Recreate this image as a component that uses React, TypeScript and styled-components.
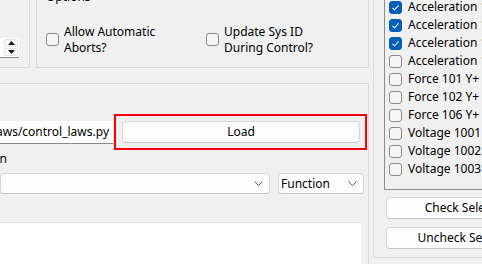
import React from "react";
import styled, { createGlobalStyle } from "styled-components";

const GlobalStyle = createGlobalStyle`
  html, body {
    margin: 0;
    padding: 0;
    background: #f0f0f0;
  }
  * {
    box-sizing: border-box;
  }
`;

const Window = styled.div`
  width: 482px;
  height: 264px;
  overflow: hidden;
  display: flex;
  align-items: flex-start;
  background: #f0f0f0;
  font-family: "Noto Sans", "Open Sans", sans-serif;
  font-size: 12px;
  line-height: 16px;
  color: #000;
`;

const LeftColumn = styled.div`
  width: 369px;
  flex: none;
  display: flex;
  flex-direction: column;
`;

const TopRow = styled.div`
  display: flex;
  gap: 6px;
  height: 82px;
  margin-top: -14px;
`;

const SideGroup = styled.div`
  width: 30px;
  flex: none;
  display: flex;
  flex-direction: column;
  justify-content: flex-end;
  padding-bottom: 9px;
  border-right: 1px solid #dadada;
  border-bottom: 1px solid #dadada;
`;

const SpinBox = styled.div`
  display: flex;
  width: 19px;
  height: 20px;
  background: #fff;
  border-bottom: 1px solid #8c8c8c;
`;

const SpinValue = styled.div`
  width: 4px;
  overflow: hidden;
`;

const SpinButtons = styled.div`
  display: flex;
  flex-direction: column;
  gap: 1px;
  width: 14px;
  margin: 1px 1px 1px 0;
`;

const SpinButton = styled.div`
  flex: 1;
  display: flex;
  align-items: center;
  justify-content: center;
  background: #fbfbfb;
  border: 1px solid #e2e2e2;
  border-radius: 2px;
`;

const OptionsGroup = styled.div`
  flex: 1;
  display: flex;
  flex-direction: column;
  padding: 2px 9px 0;
  border: 1px solid #dadada;
`;

const GroupTitle = styled.div`
  height: 16px;
`;

const OptionRow = styled.div`
  display: grid;
  grid-template-columns: 160px 1fr;
  margin-top: 19px;
`;

const Option = styled.label`
  display: flex;
  align-items: center;
  gap: 5px;
`;

const OptionText = styled.span`
  line-height: 15.5px;
`;

const Box = styled.span<{ $checked?: boolean }>`
  width: 13px;
  height: 13px;
  flex: none;
  display: flex;
  align-items: center;
  justify-content: center;
  border-radius: 3px;
  border: 1px solid ${({ $checked }) => ($checked ? "#005fb8" : "#8a8a8a")};
  background: ${({ $checked }) => ($checked ? "#005fb8" : "#f6f6f6")};
`;

const MainGroup = styled.div`
  margin-top: 15px;
  height: 200px;
  display: flex;
  flex-direction: column;
  border-top: 1px solid #dadada;
  border-right: 1px solid #dadada;
  padding-top: 30px;
`;

const PathRow = styled.div`
  display: flex;
  align-items: center;
  margin-right: 1px;
`;

const PathField = styled.div`
  width: 114px;
  height: 23px;
  flex: none;
  display: flex;
  justify-content: flex-end;
  align-items: center;
  overflow: hidden;
  white-space: nowrap;
  padding-right: 4px;
  background: #fff;
  border-right: 1px solid #e4e4e4;
  border-bottom: 1px solid #8c8c8c;
`;

const Highlight = styled.div`
  flex: 1;
  height: 36px;
  display: flex;
  align-items: center;
  padding: 0 5px 0 6px;
  border: 2px solid #ff0000;
`;

const Button = styled.div<{ $width?: number }>`
  height: 22px;
  width: ${({ $width }) => ($width ? `${$width}px` : "100%")};
  flex: none;
  display: flex;
  align-items: center;
  justify-content: center;
  white-space: nowrap;
  background: #fdfdfd;
  border: 1px solid #d6d6d6;
  border-bottom-color: #c4c4c4;
  border-radius: 4px;
`;

const FieldLabel = styled.div`
  width: 7px;
  display: flex;
  justify-content: flex-end;
  overflow: hidden;
  white-space: nowrap;
  margin-top: 1px;
`;

const ComboRow = styled.div`
  display: flex;
  gap: 8px;
  margin-top: 6px;
  padding-right: 6px;
`;

const Combo = styled.div<{ $width: number }>`
  width: ${({ $width }) => $width}px;
  height: 21px;
  flex: none;
  display: flex;
  align-items: center;
  justify-content: space-between;
  padding: 0 6px 0 2px;
  background: #fdfdfd;
  border: 1px solid #d6d6d6;
  border-bottom-color: #c4c4c4;
  border-radius: 3px;
`;

const TextArea = styled.div`
  margin-top: 28px;
  margin-right: 7px;
  flex: 1;
  background: #fff;
  border-top: 1px solid #e2e2e2;
`;

const RightColumn = styled.div`
  width: 200px;
  flex: none;
  margin-left: 4px;
  margin-top: -30px;
`;

const RightGroup = styled.div`
  display: flex;
  flex-direction: column;
  padding: 26px 0 8px 10px;
  border-left: 1px solid #dadada;
  border-bottom: 1px solid #dadada;
`;

const ChannelList = styled.div`
  height: 194px;
  display: flex;
  flex-direction: column;
  padding-top: 1px;
  border: 1px solid #8c8c8c;
  border-right: none;
  background: #f0f0f0;
  overflow: hidden;
`;

const Channel = styled.div`
  height: 18px;
  flex: none;
  display: flex;
  align-items: center;
  gap: 6px;
  padding-left: 4px;
  white-space: nowrap;
`;

const ButtonStack = styled.div`
  display: flex;
  flex-direction: column;
  gap: 8px;
  margin: 7px 0 0 2px;
`;

const Check = () => (
  <svg width="9" height="9" viewBox="0 0 9 9">
    <path d="M1.5 4.8 L3.6 6.8 L7.6 2.4" fill="none" stroke="#fff" strokeWidth="1.1" />
  </svg>
);

const Chevron = () => (
  <svg width="9" height="5" viewBox="0 0 9 5">
    <path d="M0.5 0.5 L4.5 4.5 L8.5 0.5" fill="none" stroke="#5c5c5c" strokeWidth="1" />
  </svg>
);

const Arrow = ({ down }: { down?: boolean }) => (
  <svg width="7" height="4" viewBox="0 0 7 4">
    <path d={down ? "M0 0 L7 0 L3.5 4 Z" : "M0 4 L7 4 L3.5 0 Z"} fill="#1a1a1a" />
  </svg>
);

const channels = [
  { name: "Acceleration 101 X+", checked: true },
  { name: "Acceleration 101 Y+", checked: true },
  { name: "Acceleration 101 Z+", checked: true },
  { name: "Acceleration 102 X+", checked: false },
  { name: "Force 101 Y+", checked: false },
  { name: "Force 102 Y+", checked: false },
  { name: "Force 106 Y+", checked: false },
  { name: "Voltage 1001", checked: false },
  { name: "Voltage 1002", checked: false },
  { name: "Voltage 1003", checked: false },
];

const App = () => {
  return (
    <>
      <GlobalStyle />
      <Window>
        <LeftColumn>
          <TopRow>
            <SideGroup>
              <SpinBox>
                <SpinValue />
                <SpinButtons>
                  <SpinButton>
                    <Arrow />
                  </SpinButton>
                  <SpinButton>
                    <Arrow down />
                  </SpinButton>
                </SpinButtons>
              </SpinBox>
            </SideGroup>
            <OptionsGroup>
              <GroupTitle>Options</GroupTitle>
              <OptionRow>
                <Option>
                  <Box />
                  <OptionText>
                    Allow Automatic
                    <br />
                    Aborts?
                  </OptionText>
                </Option>
                <Option>
                  <Box />
                  <OptionText>
                    Update Sys ID
                    <br />
                    During Control?
                  </OptionText>
                </Option>
              </OptionRow>
            </OptionsGroup>
          </TopRow>
          <MainGroup>
            <PathRow>
              <PathField>control_laws/control_laws.py</PathField>
              <Highlight>
                <Button>Load</Button>
              </Highlight>
            </PathRow>
            <FieldLabel>Control Law Function</FieldLabel>
            <ComboRow>
              <Combo $width={270}>
                <span />
                <Chevron />
              </Combo>
              <Combo $width={86}>
                <span>Function</span>
                <Chevron />
              </Combo>
            </ComboRow>
            <TextArea />
          </MainGroup>
        </LeftColumn>
        <RightColumn>
          <RightGroup>
            <ChannelList>
              {channels.map((c) => (
                <Channel key={c.name}>
                  <Box $checked={c.checked}>{c.checked && <Check />}</Box>
                  <span>{c.name}</span>
                </Channel>
              ))}
            </ChannelList>
            <ButtonStack>
              <Button $width={162}>Check Selected</Button>
              <Button $width={162}>Uncheck Selected</Button>
            </ButtonStack>
          </RightGroup>
        </RightColumn>
      </Window>
    </>
  );
};

export default App;
